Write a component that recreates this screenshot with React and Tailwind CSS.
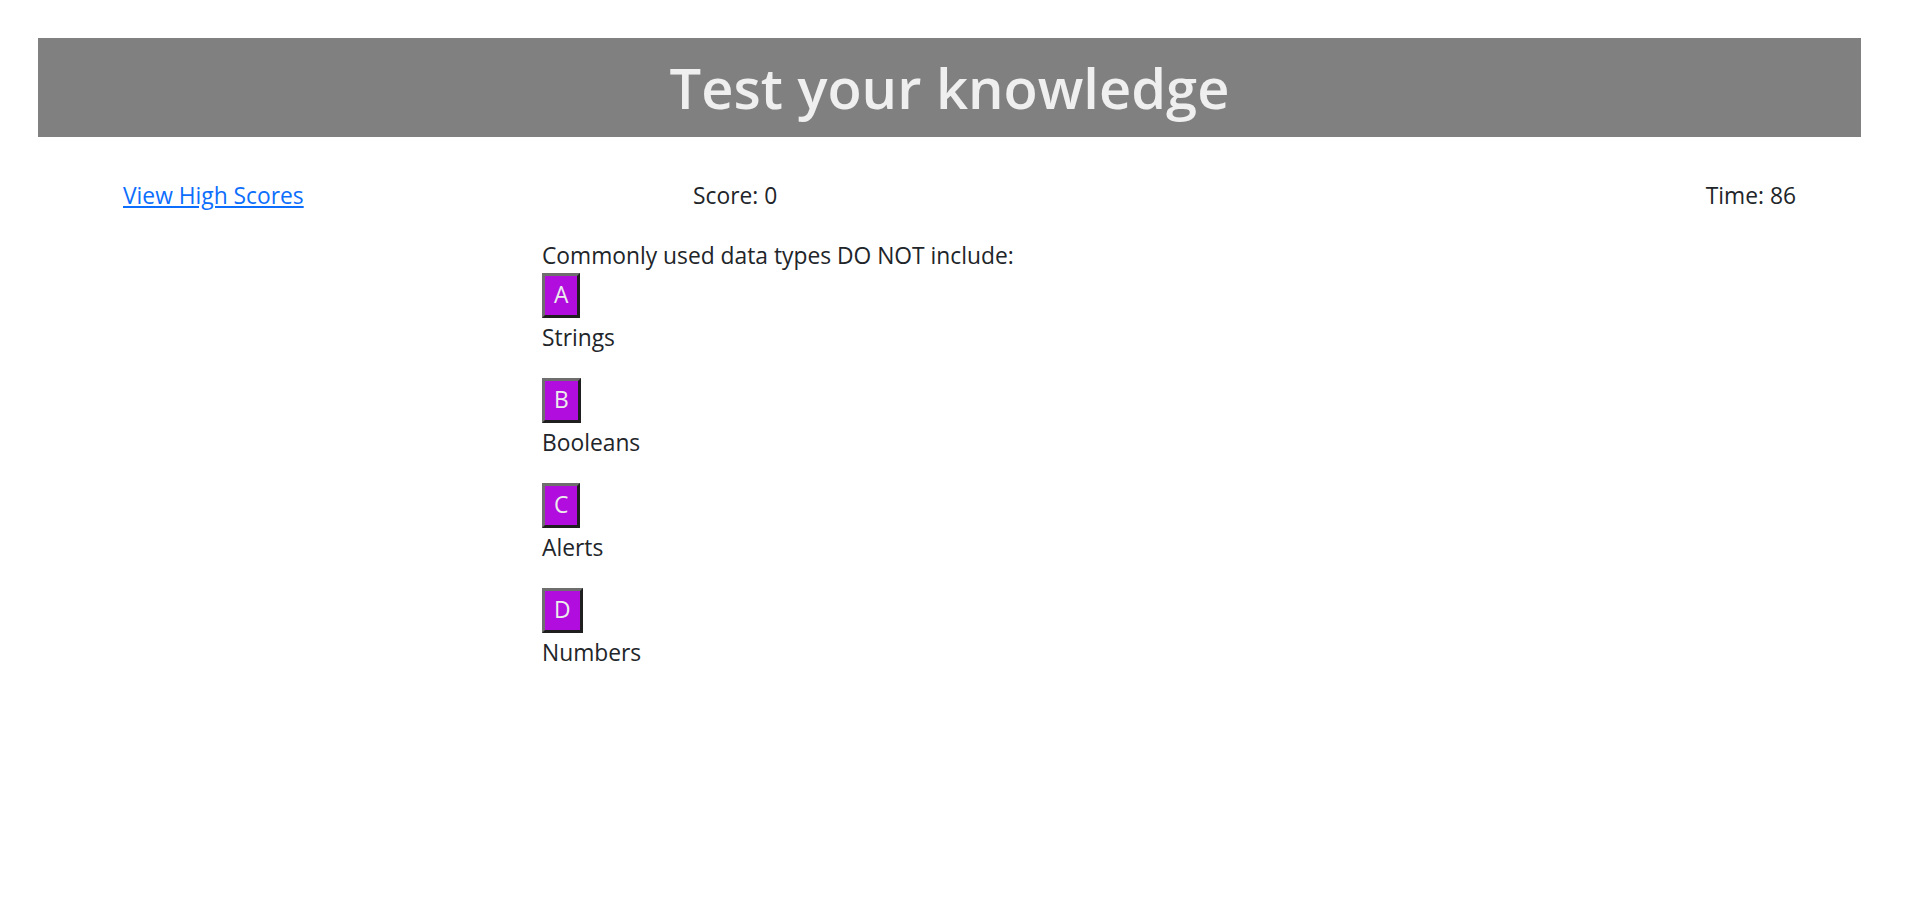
export default function App() {
  const answers = [
    { key: "A", text: "Strings" },
    { key: "B", text: "Booleans" },
    { key: "C", text: "Alerts" },
    { key: "D", text: "Numbers" },
  ];

  return (
    <div className="min-h-[904px] bg-white pt-[38px] text-[#212529] font-['Open_Sans',sans-serif] text-[22.8px] leading-[30px]">
      {/* header */}
      <header className="ml-[38px] mr-[59px] flex h-[99px] items-center justify-center bg-[#808080]">
        <h1 className="text-[56px] font-semibold leading-none text-[#efefef] -mt-[2px]">
          Test your knowledge
        </h1>
      </header>

      {/* score row */}
      <div className="mt-[44px] flex items-center pl-[123px] pr-[124px]">
        <a href="#" className="w-[570px] text-[#0d6efd] underline">
          View High Scores
        </a>
        <span className="flex-1">Score: 0</span>
        <span>Time: 86</span>
      </div>

      {/* question */}
      <div className="ml-[542px] mt-[30px]">
        <p>Commonly used data types DO NOT include:</p>
        {answers.map((a) => (
          <div key={a.key} className="mb-[25px]">
            <button className="mt-[2px] block h-[45px] border-[3px] border-t-[#6e6e6e] border-l-[#6e6e6e] border-b-[#1f1f1f] border-r-[#1f1f1f] bg-[#b10dde] px-[9px] text-[#ececec] leading-none">
              {a.key}
            </button>
            <p className="mt-[5px]">{a.text}</p>
          </div>
        ))}
      </div>
    </div>
  );
}
